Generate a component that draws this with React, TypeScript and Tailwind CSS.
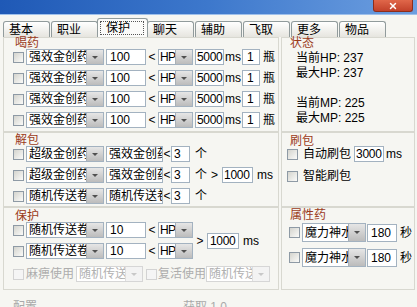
import { X } from 'lucide-react';
import type { ReactNode } from 'react';

const font = "font-['Liberation_Sans','Noto_Sans_CJK_SC',sans-serif]";

function Check({ dim = false, className = '' }: { dim?: boolean; className?: string }) {
  return (
    <span
      className={`block h-[11px] w-[11px] shrink-0 border ${
        dim
          ? 'border-[#d3d3d3] bg-[#f5f5f5]'
          : 'border-[#8e9aa5] bg-gradient-to-br from-[#d4d4ce] to-[#fbfbf9]'
      } ${className}`}
    />
  );
}

function Field({ text, className = '' }: { text: string; className?: string }) {
  return (
    <div
      className={`flex h-[16px] shrink-0 items-center overflow-hidden whitespace-nowrap border border-[#a3b2c0] bg-white text-[12px] leading-[14px] ${className}`}
    >
      {text}
    </div>
  );
}

function Combo({
  text,
  dim = false,
  className = '',
  textClass = 'pl-[2px]',
}: {
  text: string;
  dim?: boolean;
  className?: string;
  textClass?: string;
}) {
  return (
    <div
      className={`flex h-[16px] shrink-0 border bg-white ${
        dim ? 'border-[#d6d6d6] text-[#b0b0b0]' : 'border-[#a3b2c0]'
      } ${className}`}
    >
      <div
        className={`flex min-w-0 flex-1 items-center overflow-hidden whitespace-nowrap text-[12px] leading-[14px] ${textClass}`}
      >
        {text}
      </div>
      <div
        className={`flex w-[17px] shrink-0 items-center justify-center border-l ${
          dim ? 'border-[#dedede] bg-[#f3f3f3]' : 'border-[#a9b0b6] bg-gradient-to-b from-[#e6e6e6] to-[#bcbcbc]'
        }`}
      >
        <span
          className={`h-0 w-0 border-x-[3px] border-t-[3px] border-x-transparent ${
            dim ? 'border-t-[#c8c8c8]' : 'border-t-[#505050]'
          }`}
        />
      </div>
    </div>
  );
}

function Group({
  label,
  className = '',
  labelClass = '',
  children,
}: {
  label: string;
  className?: string;
  labelClass?: string;
  children?: ReactNode;
}) {
  return (
    <div className={`border border-[#d8d8d0] ${className}`}>
      <div className={`text-[12px] text-[#9b3b1b] ${labelClass}`}>{label}</div>
      {children}
    </div>
  );
}

const tabs = ['基本', '职业', '保护', '聊天', '辅助', '飞取', '更多', '物品'];

function DrinkRow() {
  return (
    <div className="flex h-[16px] items-center text-[12px]">
      <Check />
      <Combo text="强效金创药" className="ml-[2px] w-[78px]" />
      <Field text="100" className="ml-[2px] w-[40px] pl-[3px]" />
      <span className="w-[12px] text-center">&lt;</span>
      <Combo text="HP" className="w-[35px]" textClass="pl-[1px] tracking-[-0.7px]" />
      <Field text="5000" className="ml-[2px] w-[29px] pl-[1px] tracking-[-0.3px]" />
      <span className="w-[18px] text-center">ms</span>
      <Field text="1" className="w-[18px] pl-[4px]" />
      <span className="ml-[3px]">瓶</span>
    </div>
  );
}

function UnpackRow({ a, b, extra = false }: { a: string; b: string; extra?: boolean }) {
  return (
    <div className="flex h-[16px] items-center text-[12px]">
      <Check />
      <Combo text={a} className="ml-[2px] w-[78px]" />
      <Field text={b} className="ml-[2px] w-[57px] pl-[2px]" />
      <span className="w-[8px] text-center">&lt;</span>
      <Field text="3" className="w-[19px] pl-[2px]" />
      <span className="ml-[5px]">个</span>
      {extra && (
        <>
          <span className="w-[15px] text-center">&gt;</span>
          <Field text="1000" className="w-[31px] pl-[1px] tracking-[-0.3px]" />
          <span className="ml-[4px]">ms</span>
        </>
      )}
    </div>
  );
}

function GuardRow() {
  return (
    <div className="flex h-[16px] items-center text-[12px]">
      <Check />
      <Combo text="随机传送卷" className="ml-[2px] w-[78px]" />
      <Field text="10" className="ml-[2px] w-[40px] pl-[3px]" />
      <span className="w-[12px] text-center">&lt;</span>
      <Combo text="HP" className="w-[35px]" textClass="pl-[1px] tracking-[-0.7px]" />
    </div>
  );
}

function PotionRow() {
  return (
    <div className="flex h-[19px] items-center text-[12px]">
      <Check />
      <Combo text="魔力神水" className="ml-[2px] !h-[19px] w-[64px]" />
      <Field text="180" className="ml-[1px] !h-[18px] w-[30px] pl-[3px]" />
      <span className="ml-[3px]">秒</span>
    </div>
  );
}

export default function App() {
  return (
    <div className={`h-[307px] w-[417px] overflow-hidden bg-[#f6f6f2] text-black ${font}`}>
      {/* title bar */}
      <div className="flex h-[15px] justify-end border-b border-[#9fc0ea] bg-gradient-to-r from-[#1f59b6] via-[#3d78cc] to-[#6d9fe0] pr-[4px]">
        <div className="flex h-[12px] w-[40px] items-center justify-center rounded-b-[3px] border border-t-0 border-[#8d2d1c] bg-gradient-to-b from-[#e0674a] to-[#c2412a]">
          <X size={10} strokeWidth={3.5} color="#ffffff" />
        </div>
      </div>

      {/* tabs */}
      <div className="flex h-[22px] items-end gap-[1px] pl-[3px]">
        {tabs.map((t) =>
          t === '保护' ? (
            <div
              key={t}
              className="relative z-10 -mx-[2px] h-[19px] w-[51px] rounded-t-[3px] border border-b-0 border-[#919b9c] bg-[#fbfbf9] pl-[2px] pt-[2px] text-[12px] leading-[12px]"
            >
              <span className="block w-[44px] border border-dotted border-[#555] pl-[5px] leading-[12px]">{t}</span>
            </div>
          ) : (
            <div
              key={t}
              className="h-[16px] w-[47px] rounded-t-[3px] border border-b-0 border-[#919b9c] bg-gradient-to-b from-white to-[#e6e5df] pl-[5px] pt-[1px] text-[12px] leading-[14px]"
            >
              {t}
            </div>
          )
        )}
      </div>

      {/* page */}
      <div className="flex gap-[2px] pl-[3px]">
        <div className="flex w-[276px] flex-col">
          <Group label="喝药" className="h-[95px] pl-[9px]" labelClass="pl-[2px] leading-[11px]">
            <div className="flex flex-col gap-[5px]">
              <DrinkRow />
              <DrinkRow />
              <DrinkRow />
              <DrinkRow />
            </div>
          </Group>
          <Group label="解包" className="h-[75px] pl-[9px] pt-[2px]" labelClass="pl-[2px] leading-[11px]">
            <div className="flex flex-col gap-[5px]">
              <UnpackRow a="超级金创药" b="强效金创药" />
              <UnpackRow a="超级金创药" b="强效金创药" extra />
              <UnpackRow a="随机传送卷" b="随机传送卷" />
            </div>
          </Group>
          <Group label="保护" className="h-[83px] pl-[9px] pt-[3px]" labelClass="pl-[2px] leading-[11px]">
            <div className="flex items-center text-[12px]">
              <div className="flex flex-col gap-[5px]">
                <GuardRow />
                <GuardRow />
              </div>
              <span className="w-[14px] text-center">&gt;</span>
              <Field text="1000" className="w-[32px] pl-[2px] tracking-[-0.3px]" />
              <span className="ml-[4px]">ms</span>
            </div>
            <div className="mt-[7px] flex h-[16px] items-center text-[12px] text-[#adadad]">
              <Check dim />
              <span className="ml-[2px]">麻痹使用</span>
              <Combo text="随机传送" dim className="ml-[2px] w-[67px]" />
              <Check dim className="ml-[3px]" />
              <span className="ml-[1px]">复活使用</span>
              <Combo text="随机传送" dim className="w-[64px]" />
            </div>
          </Group>
        </div>

        <div className="flex w-[134px] flex-col">
          <Group label="状态" className="h-[95px] pl-[8px]" labelClass="leading-[11px]">
            <div className="mt-[2px] pl-[6px] text-[12px] leading-[15px]">
              <div>当前HP: 237</div>
              <div>最大HP: 237</div>
              <div className="h-[15px]" />
              <div>当前MP: 225</div>
              <div>最大MP: 225</div>
            </div>
          </Group>
          <Group label="刷包" className="h-[75px] pl-[5px] pt-[3px]" labelClass="pl-[3px] leading-[10px]">
            <div className="flex h-[16px] items-center text-[12px]">
              <Check />
              <span className="ml-[5px]">自动刷包</span>
              <Field text="3000" className="ml-[3px] w-[30px] pl-[1px] tracking-[-0.3px]" />
              <span className="ml-[2px]">ms</span>
            </div>
            <div className="mt-[6px] flex h-[16px] items-center text-[12px]">
              <Check />
              <span className="ml-[5px]">智能刷包</span>
            </div>
          </Group>
          <Group label="属性药" className="h-[83px] pl-[7px] pt-[2px]" labelClass="pl-[1px] leading-[11px]">
            <div className="mt-[2px] flex flex-col gap-[6px]">
              <PotionRow />
              <PotionRow />
            </div>
          </Group>
        </div>
      </div>

      {/* footer */}
      <div className="flex pl-[13px] pt-[10px] text-[12px] leading-[14px] text-[#a9a9a9]">
        <span className="w-[170px]">配置</span>
        <span>获取 1.0</span>
      </div>
    </div>
  );
}
